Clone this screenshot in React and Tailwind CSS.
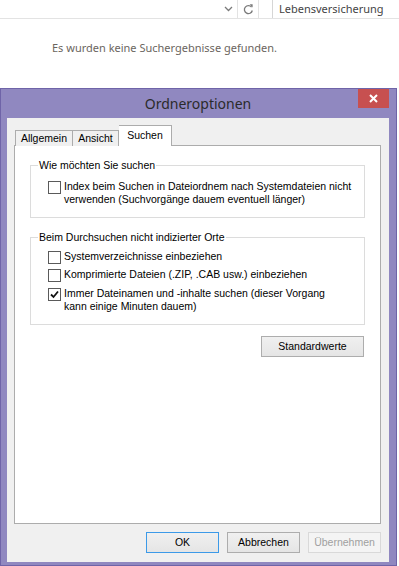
import React from 'react';

const ui = { fontFamily: '"Liberation Sans", Arial, sans-serif' };
const seg = { fontFamily: '"Noto Sans", "Open Sans", sans-serif' };

function Checkbox({ checked }) {
  return (
    <span className="mt-[1px] flex h-[13px] w-[13px] shrink-0 items-center justify-center border border-[#5a5a5a] bg-white">
      {checked && (
        <svg width="9" height="9" viewBox="0 0 9 9">
          <path d="M1 4.5 L3.5 7 L8 1.5" fill="none" stroke="#111" strokeWidth="1.8" />
        </svg>
      )}
    </span>
  );
}

function Option({ checked, children }) {
  return (
    <label className="flex items-start gap-[3px] whitespace-nowrap text-[10.5px] leading-[13px] text-black">
      <Checkbox checked={checked} />
      <span>{children}</span>
    </label>
  );
}

function GroupBox({ title, className, children }) {
  return (
    <div className={`relative border border-[#dcdcdc] ${className}`}>
      <span className="absolute left-[7px] top-[-8px] bg-white px-[1px] text-[10.5px] leading-[14px] text-black">
        {title}
      </span>
      {children}
    </div>
  );
}

function Button({ children, variant }) {
  const styles = {
    default: 'border-[#adadad] bg-gradient-to-b from-[#f0f0f0] to-[#e5e5e5] text-black',
    primary: 'border-[#3c9ae8] bg-gradient-to-b from-[#f0f0f0] to-[#e5e5e5] text-black',
    disabled: 'border-[#d9d9d9] bg-[#f4f4f4] text-[#a0a0a0]',
  };
  return (
    <button className={`flex h-[21px] w-[73px] items-center justify-center border text-[10.5px] ${styles[variant || 'default']}`}>
      {children}
    </button>
  );
}

export default function App() {
  return (
    <div className="h-[566px] w-[399px] overflow-hidden bg-white">
      {/* browser toolbar */}
      <div className="flex h-[19px] border-b border-[#e3e3e3]">
        <div className="flex flex-1 items-center justify-end pr-[4px]">
          <svg width="9" height="6" viewBox="0 0 9 6">
            <path d="M1 1 L4.5 4.5 L8 1" fill="none" stroke="#7a7a7a" strokeWidth="1.3" />
          </svg>
        </div>
        <div className="flex w-[22px] items-center justify-center border-l border-r border-[#e3e3e3]">
          <svg width="11" height="12" viewBox="0 0 11 12">
            <path d="M8.6 4.2 A4 4 0 1 0 9.3 7.5" fill="none" stroke="#7a7a7a" strokeWidth="1.3" />
            <path d="M6.6 1.2 L9.6 1.2 L9.6 4.4 Z" fill="#7a7a7a" />
          </svg>
        </div>
        <div className="ml-[13px] flex w-[127px] items-center border-l border-[#d6d6d6] pl-[6px] text-[11px] text-[#444]" style={seg}>
          Lebensversicherung
        </div>
      </div>

      <p className="ml-[52px] mt-[21px] text-[11px] leading-[16px] text-[#6b655e]" style={seg}>
        Es wurden keine Suchergebnisse gefunden.
      </p>

      {/* dialog */}
      <div className="mt-[32px] flex h-[478px] w-[397px] flex-col border border-[#6f64a8] bg-[#9088c0] pl-[6px] pr-[7px]">
        <div className="relative flex h-[29px] items-center justify-center">
          <span className="text-[14px] text-[#2b2b2b]" style={seg}>Ordneroptionen</span>
          <div className="absolute right-0 top-0 flex h-[19px] w-[31px] items-center justify-center bg-[#c75050]">
            <svg width="9" height="9" viewBox="0 0 9 9">
              <path d="M1 1 L8 8 M8 1 L1 8" stroke="#fff" strokeWidth="2" />
            </svg>
          </div>
        </div>

        <div className="flex h-[444px] flex-col bg-[#f0f0f0] pl-[7px] pr-[8px] pt-[8px]" style={ui}>
          {/* tabs */}
          <div className="relative z-10 ml-[1px] flex h-[20px] items-end">
            <div className="flex h-[16px] w-[58px] items-center justify-center border border-b-0 border-[#acacac] bg-[#f0f0f0] text-[10.5px]">
              Allgemein
            </div>
            <div className="flex h-[16px] w-[46px] items-center justify-center border border-b-0 border-l-0 border-[#acacac] bg-[#f0f0f0] text-[10.5px]">
              Ansicht
            </div>
            <div className="flex h-[21px] w-[53px] items-start justify-center border border-b-0 border-l-0 border-[#acacac] bg-white pt-[2px] text-[10.5px]">
              Suchen
            </div>
          </div>

          <div className="mt-[-1px] flex h-[379px] flex-col border border-[#acacac] bg-white px-[15px] pt-[19px]">
            <GroupBox title="Wie möchten Sie suchen" className="h-[53px]">
              <div className="pl-[17px] pt-[14px]">
                <Option>
                  Index beim Suchen in Dateiordnem nach Systemdateien nicht
                  <br />
                  verwenden (Suchvorgänge dauem eventuell länger)
                </Option>
              </div>
            </GroupBox>

            <GroupBox title="Beim Durchsuchen nicht indizierter Orte" className="mt-[19px] h-[88px]">
              <div className="flex flex-col gap-[4px] pl-[17px] pt-[12px]">
                <Option>Systemverzeichnisse einbeziehen</Option>
                <Option>Komprimierte Dateien (.ZIP, .CAB usw.) einbeziehen</Option>
                <div className="mt-[1px]">
                  <Option checked>
                    Immer Dateinamen und -inhalte suchen (dieser Vorgang
                    <br />
                    kann einige Minuten dauem)
                  </Option>
                </div>
              </div>
            </GroupBox>

            <div className="mt-[11px] flex justify-end pr-[1px]">
              <button className="flex h-[21px] w-[103px] items-center justify-center border border-[#adadad] bg-gradient-to-b from-[#f0f0f0] to-[#e5e5e5] text-[10.5px]">
                Standardwerte
              </button>
            </div>
          </div>

          <div className="mt-[8px] flex justify-end gap-[8px]">
            <Button variant="primary">OK</Button>
            <Button>Abbrechen</Button>
            <Button variant="disabled">Übernehmen</Button>
          </div>
        </div>
      </div>
    </div>
  );
}
